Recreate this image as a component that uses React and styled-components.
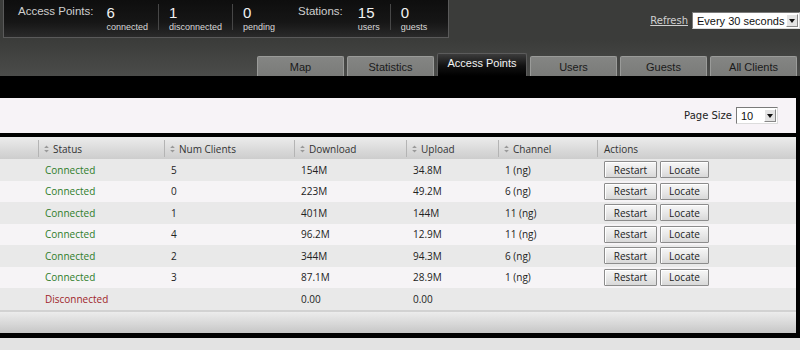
import React from "react";
import styled, { createGlobalStyle } from "styled-components";

const Global = createGlobalStyle`
  html, body { margin: 0; padding: 0; }
  body {
    width: 800px;
    height: 350px;
    overflow: hidden;
    background: #e3e3e3;
    font-family: "Open Sans", "Liberation Sans", sans-serif;
  }
`;

const Page = styled.div`
  width: 800px;
  display: flex;
  flex-direction: column;
`;

const Header = styled.div`
  height: 76px;
  display: flex;
  flex-direction: column;
  justify-content: space-between;
  background: linear-gradient(to bottom, #3b3c3a 0px, #3b3c3a 40px, #4b4c4a 76px);
`;

const TopRow = styled.div`
  display: flex;
  align-items: flex-start;
  justify-content: space-between;
`;

const StatsBox = styled.div`
  margin-left: 3px;
  width: 446px;
  flex-shrink: 0;
  height: 38px;
  box-sizing: border-box;
  padding-left: 14px;
  display: flex;
  align-items: flex-start;
  white-space: nowrap;
  background: linear-gradient(to bottom, #0e0e0e, #161616 60%, #2a2a2a);
  border: 1px solid #5a5a5a;
  border-top: none;
`;

const GroupLabel = styled.div`
  font-family: "Liberation Sans", sans-serif;
  font-size: 11.5px;
  color: #cfcfcf;
  margin-top: 5px;
  flex-shrink: 0;
  margin-right: ${(p) => p.$gap}px;
  margin-left: ${(p) => p.$lead || 0}px;
`;

const Stat = styled.div`
  display: flex;
  flex-direction: column;
  flex-shrink: 0;
  padding: 4px 10px 0 ${(p) => (p.$first ? 0 : 10)}px;
  margin-top: 4px;
  height: 26px;
  box-sizing: border-box;
  border-right: ${(p) => (p.$sep ? "1px solid #474747" : "none")};
`;

const StatNum = styled.div`
  font-family: "Liberation Sans", sans-serif;
  font-size: 15px;
  line-height: 13px;
  color: #f2f2f2;
  margin-top: -2px;
`;

const StatCaption = styled.div`
  font-family: "Liberation Sans", sans-serif;
  font-size: 9px;
  line-height: 10px;
  color: #d8d8d8;
  margin-top: 3px;
`;

const RefreshArea = styled.div`
  display: flex;
  align-items: center;
  flex-shrink: 0;
  gap: 4px;
  margin-top: 12px;
`;

const RefreshLink = styled.a`
  font-family: "DejaVu Sans", sans-serif;
  font-size: 10px;
  color: #d0d0d0;
  text-decoration: underline;
  cursor: pointer;
`;

const SelectBox = styled.div`
  display: flex;
  align-items: center;
  width: ${(p) => p.$w}px;
  height: 17px;
  box-sizing: border-box;
  background: #fff;
  border: 1px solid #7a7a7a;
  border-right-color: #dcdcdc;
  border-bottom-color: #dcdcdc;
  font-family: "Liberation Sans", sans-serif;
  font-size: 11px;
  color: #111;
`;

const SelectText = styled.span`
  flex: 1;
  padding-left: 4px;
  white-space: nowrap;
`;

const SelectArrow = styled.span`
  width: 12px;
  height: 13px;
  margin-right: 1px;
  box-sizing: border-box;
  background: #e4e4e4;
  border: 1px solid #fff;
  border-right-color: #888;
  border-bottom-color: #888;
  display: flex;
  align-items: center;
  justify-content: center;
  &::after {
    content: "";
    border-left: 3.5px solid transparent;
    border-right: 3.5px solid transparent;
    border-top: 4px solid #111;
  }
`;

const Tabs = styled.div`
  display: flex;
  justify-content: flex-end;
  align-items: flex-end;
  gap: 3px;
  padding-right: 3px;
`;

const Tab = styled.div`
  width: ${(p) => (p.$active ? 90 : 87)}px;
  height: ${(p) => (p.$active ? 23 : 20)}px;
  box-sizing: border-box;
  display: flex;
  align-items: center;
  justify-content: center;
  padding-bottom: ${(p) => (p.$active ? 4 : 0)}px;
  font-family: "Liberation Sans", sans-serif;
  font-size: 11px;
  border-radius: 2px 2px 0 0;
  color: ${(p) => (p.$active ? "#f4f4f4" : "#1a1a1a")};
  background: ${(p) =>
    p.$active
      ? "linear-gradient(to bottom, #3c3c3c, #111 55%, #000)"
      : "linear-gradient(to bottom, #848583, #7a7b79)"};
  border: 1px solid ${(p) => (p.$active ? "#5c5c5c" : "#9a9b99")};
  border-bottom: none;
`;

const Frame = styled.div`
  background: #000;
  padding: 22px 4px 5px 0;
  display: flex;
  flex-direction: column;
`;

const Toolbar = styled.div`
  height: 35px;
  background: #f7f3f7;
  display: flex;
  align-items: center;
  justify-content: flex-end;
  gap: 4px;
  padding-right: 18px;
  margin-bottom: 4px;
`;

const ToolbarLabel = styled.span`
  font-family: "DejaVu Sans", sans-serif;
  font-size: 10px;
  color: #222;
`;

const cols = "38px 126px 130px 112px 92px 99px 1fr";

const HeadRow = styled.div`
  display: grid;
  grid-template-columns: ${cols};
  height: 22px;
  background: linear-gradient(to bottom, #ececec, #d9d9d9 60%, #cdcdcd);
`;

const HeadCell = styled.div`
  display: flex;
  align-items: center;
  gap: 4px;
  padding-left: ${(p) => (p.$plain ? 6 : 5)}px;
  font-size: 10px;
  color: #333;
  border-left: ${(p) => (p.$first ? "none" : "1px solid #b4b4b4")};
  margin: 3px 0 2px;
`;

const Row = styled.div`
  display: grid;
  grid-template-columns: ${cols};
  height: 21.5px;
  background: ${(p) => (p.$alt ? "#f6f4f6" : "#e9e9e9")};
`;

const Cell = styled.div`
  display: flex;
  align-items: center;
  padding-left: 7px;
  gap: 3px;
  font-size: 10px;
  color: ${(p) =>
    p.$status === "ok" ? "#2f7d2a" : p.$status === "bad" ? "#a0262a" : "#222"};
`;

const Button = styled.button`
  width: ${(p) => p.$w}px;
  height: 17px;
  padding: 0;
  font-family: "Open Sans", sans-serif;
  font-size: 10px;
  color: #222;
  background: linear-gradient(to bottom, #f7f7f7, #e6e6e6 60%, #d8d8d8);
  border: 1px solid #8c8c8c;
  border-radius: 1px;
  box-shadow: inset 1px 1px 0 #fff;
`;

const Footer = styled.div`
  height: 21px;
  border-top: 2px solid #d2d2d2;
  background: linear-gradient(to bottom, #ececec, #d6d6d6 60%, #c6c6c6);
`;

const SortIcon = () => (
  <svg width="5" height="8" viewBox="0 0 5 8">
    <path d="M2.5 0.5 L4.8 3 L0.2 3 Z" fill="#999" />
    <path d="M2.5 7.5 L4.8 5 L0.2 5 Z" fill="#999" />
  </svg>
);

const rows = [
  { status: "Connected", clients: "5", down: "154M", up: "34.8M", ch: "1 (ng)", actions: true },
  { status: "Connected", clients: "0", down: "223M", up: "49.2M", ch: "6 (ng)", actions: true },
  { status: "Connected", clients: "1", down: "401M", up: "144M", ch: "11 (ng)", actions: true },
  { status: "Connected", clients: "4", down: "96.2M", up: "12.9M", ch: "11 (ng)", actions: true },
  { status: "Connected", clients: "2", down: "344M", up: "94.3M", ch: "6 (ng)", actions: true },
  { status: "Connected", clients: "3", down: "87.1M", up: "28.9M", ch: "1 (ng)", actions: true },
  { status: "Disconnected", clients: "", down: "0.00", up: "0.00", ch: "", actions: false },
];

const tabs = ["Map", "Statistics", "Access Points", "Users", "Guests", "All Clients"];

export default function App() {
  return (
    <Page>
      <Global />
      <Header>
        <TopRow>
          <StatsBox>
            <GroupLabel $gap={13}>Access Points:</GroupLabel>
            <Stat $first $sep>
              <StatNum>6</StatNum>
              <StatCaption>connected</StatCaption>
            </Stat>
            <Stat $sep>
              <StatNum>1</StatNum>
              <StatCaption>disconnected</StatCaption>
            </Stat>
            <Stat>
              <StatNum>0</StatNum>
              <StatCaption>pending</StatCaption>
            </Stat>
            <GroupLabel $gap={15} $lead={13}>Stations:</GroupLabel>
            <Stat $first $sep>
              <StatNum>15</StatNum>
              <StatCaption>users</StatCaption>
            </Stat>
            <Stat>
              <StatNum>0</StatNum>
              <StatCaption>guests</StatCaption>
            </Stat>
          </StatsBox>
          <RefreshArea>
            <RefreshLink>Refresh</RefreshLink>
            <SelectBox $w={108}>
              <SelectText>Every 30 seconds</SelectText>
              <SelectArrow />
            </SelectBox>
          </RefreshArea>
        </TopRow>
        <Tabs>
          {tabs.map((t) => (
            <Tab key={t} $active={t === "Access Points"}>
              {t}
            </Tab>
          ))}
        </Tabs>
      </Header>
      <Frame>
        <Toolbar>
          <ToolbarLabel>Page Size</ToolbarLabel>
          <SelectBox $w={42}>
            <SelectText>10</SelectText>
            <SelectArrow />
          </SelectBox>
        </Toolbar>
        <HeadRow>
          <HeadCell $first />
          <HeadCell><SortIcon />Status</HeadCell>
          <HeadCell><SortIcon />Num Clients</HeadCell>
          <HeadCell><SortIcon />Download</HeadCell>
          <HeadCell><SortIcon />Upload</HeadCell>
          <HeadCell><SortIcon />Channel</HeadCell>
          <HeadCell $plain>Actions</HeadCell>
        </HeadRow>
        {rows.map((r, i) => (
          <Row key={i} $alt={i % 2 === 1}>
            <Cell />
            <Cell $status={r.status === "Connected" ? "ok" : "bad"}>{r.status}</Cell>
            <Cell>{r.clients}</Cell>
            <Cell>{r.down}</Cell>
            <Cell>{r.up}</Cell>
            <Cell>{r.ch}</Cell>
            <Cell>
              {r.actions && (
                <>
                  <Button $w={53}>Restart</Button>
                  <Button $w={49}>Locate</Button>
                </>
              )}
            </Cell>
          </Row>
        ))}
        <Footer />
      </Frame>
    </Page>
  );
}
